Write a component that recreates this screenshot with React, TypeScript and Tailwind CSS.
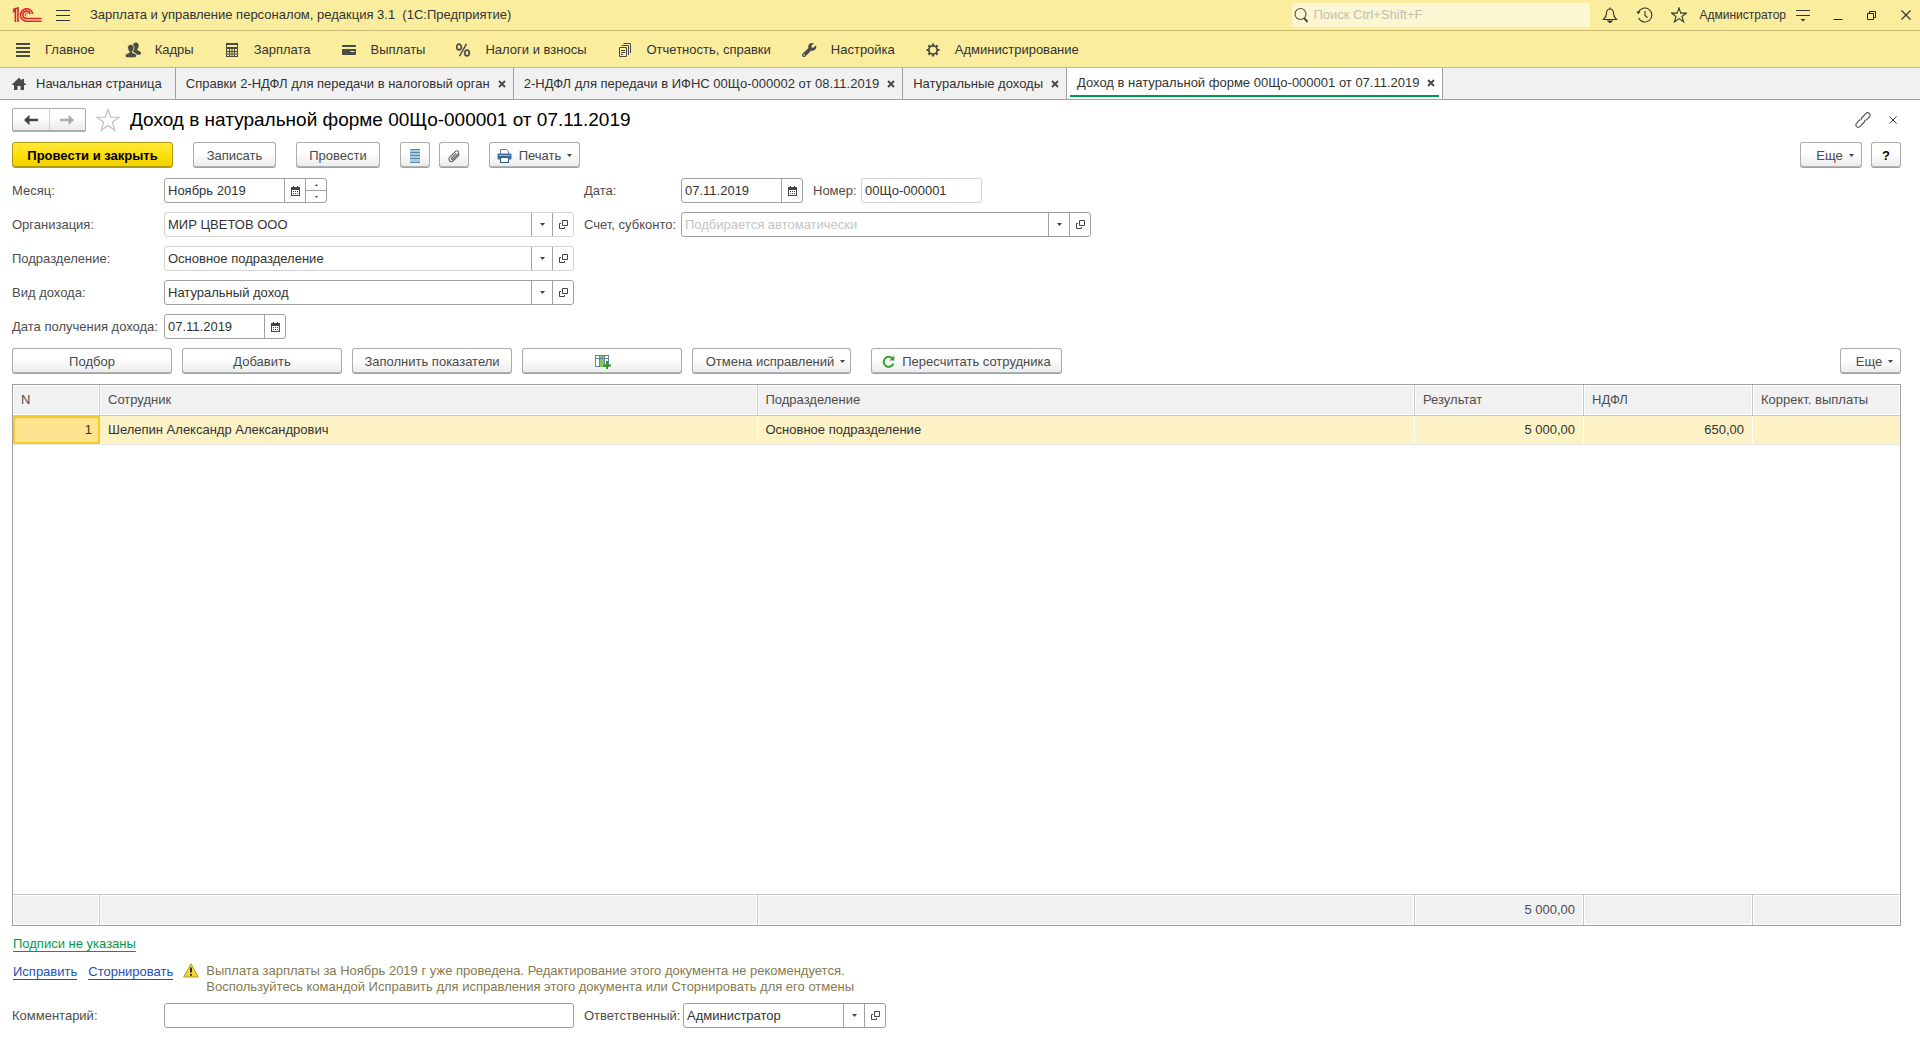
import React, { useState } from "react";

type Kids = { children?: React.ReactNode };

/* ---------- icons ---------- */

const Logo = () => (
  <svg width="30" height="16" viewBox="0 0 30 16" fill="none" stroke="#d9232b" strokeWidth="1.6">
    <path d="M1 5 3.400 3.200V15M1 2.600 6 1V15" />
    <path d="M20.800 6.900A6.200 6.200 0 1 0 14.600 14.200H29.500" />
    <path d="M18.200 7.200A3.700 3.700 0 1 0 14.600 11.500H29.500" />
    <path d="M16 7.200A1.400 1.400 0 1 0 14.600 9" strokeWidth="1" />
  </svg>
);

const Burger = () => (
  <svg width="14" height="13" viewBox="0 0 14 13" stroke="#333" strokeWidth="1">
    <path d="M0 1.500h14M0 6.500h14M0 11.500h14" />
  </svg>
);

const MainIcon = () => (
  <svg width="16" height="16" viewBox="0 0 16 16" stroke="#4b4b45" strokeWidth="2">
    <path d="M1 2h14M1 6h14M1 10h14M1 14h14" />
  </svg>
);

const PeopleIcon = () => (
  <svg width="16" height="16" viewBox="0 0 16 16">
    <path d="M10.800.5c1.900 0 3 1.300 2.900 3.200-.1 1.600-.7 2.600-1.400 3.200v1.300c1.500.6 3.200 1 3.600 2.300.2.600.1 1.500-.3 1.800-.7.4-1.900.5-3.200.5L8 9.500V3C8.300 1.500 9.300.5 10.800.5z" fill="#4b4b45" />
    <path d="M5.800 2.400c2.100 0 3.300 1.400 3.200 3.400-.1 1.800-.9 2.900-1.600 3.500v1.300c1.600.6 3.700 1.100 4.200 2.500.2.600.1 1.400-.3 1.800-1 .7-3.300.9-5.500.9-2.300 0-4.400-.2-5.300-.9-.4-.4-.5-1.200-.2-1.800.5-1.400 2.300-1.900 3.900-2.500V9.300C3.500 8.700 2.700 7.600 2.600 5.800c-.1-2 1.100-3.400 3.200-3.400z" fill="#4b4b45" stroke="#fbed9e" strokeWidth=".8" />
  </svg>
);

const CalcIcon = () => (
  <svg width="16" height="16" viewBox="0 0 16 16">
    <rect x="2" y="1" width="12" height="14" fill="#4b4b45" />
    <path d="M3 3h10v2H3zM3 7h2v2H3zM6 7h1.500v2H6zM8.500 7H10v2H8.500zM11 7h2v2h-2zM3 10h2v1.500H3zM6 10h1.500v1.500H6zM8.500 10H10v1.500H8.500zM11 10h2v1.500h-2zM3 12.500h2V14H3zM6 12.500h1.500V14H6zM8.500 12.500H10V14H8.500zM11 12.500h2V14h-2z" fill="#fbed9e" />
  </svg>
);

const CardIcon = () => (
  <svg width="16" height="16" viewBox="0 0 16 16">
    <path d="M2 3h12a1 1 0 0 1 1 1v1H1V4a1 1 0 0 1 1-1zM1 7h14v5a1 1 0 0 1-1 1H2a1 1 0 0 1-1-1z" fill="#4b4b45" />
    <path d="M9.500 9.500h4" stroke="#fbed9e" />
  </svg>
);

const PercentIcon = () => (
  <svg width="16" height="16" viewBox="0 0 16 16" fill="none" stroke="#4b4b45">
    <ellipse cx="4" cy="5" rx="2.300" ry="2.800" strokeWidth="1.700" />
    <ellipse cx="12" cy="11" rx="2.300" ry="2.800" strokeWidth="1.700" />
    <path d="M11.500 1.800 4.500 14.200" strokeWidth="1.500" />
  </svg>
);

const ReportIcon = () => (
  <svg width="16" height="16" viewBox="0 0 16 16" fill="none" stroke="#4b4b45" strokeWidth="1">
    <path d="M2.500 5.500h7v9h-7zM4.500 3.500h7v9.500M6.500 1.500h7v9.500" />
    <path d="M4 8.500h4M4 10.500h4M4 12.500h2" />
  </svg>
);

const WrenchIcon = () => (
  <svg width="16" height="16" viewBox="0 0 16 16" fill="#4b4b45">
    <path d="M12.800 1.200 10.300 3.700l.4 1.700 1.800.4 2.500-2.500c.6 1.700.2 3.400-1 4.500-1.100 1-2.500 1.300-3.900.9L4.300 14.500c-.8.8-2 .8-2.800.1-.7-.8-.7-2 .1-2.800l5.800-5.800c-.4-1.400-.1-2.800.9-3.900 1.200-1.200 2.900-1.500 4.500-.9z" />
    <circle cx="3" cy="13.100" r=".8" fill="#fbed9e" />
  </svg>
);

const GearIcon = () => (
  <svg width="16" height="16" viewBox="0 0 16 16" fill="none" stroke="#4b4b45">
    <circle cx="8" cy="8" r="4.200" strokeWidth="1.800" />
    <path d="M8 1.500v2M8 12.500v2M1.500 8h2M12.500 8h2M3.400 3.400l1.400 1.400M11.200 11.200l1.400 1.400M3.400 12.600l1.400-1.400M11.200 4.800l1.400-1.400" strokeWidth="2.200" />
  </svg>
);

const HomeIcon = () => (
  <svg width="16" height="14" viewBox="0 0 16 14" fill="#484848">
    <path d="M8 .8 11 3.600V2h2v3.500l2.600 2.600H13V13H9.500V9h-3v4H3V8.100H.4z" />
  </svg>
);

const SearchIcon = () => (
  <svg width="15" height="16" viewBox="0 0 15 16" fill="none" stroke="#55502f">
    <circle cx="6.500" cy="7" r="5.500" strokeWidth="1.100" />
    <path d="m10 11 3.600 4" strokeWidth="2" />
  </svg>
);

const BellIcon = () => (
  <svg width="16" height="16" viewBox="0 0 16 16" fill="none" stroke="#333" strokeWidth="1.100">
    <path d="M8 .5v1.600M8 2c-2.400 0-3.500 1.900-3.500 4.200C4.500 9.500 3.300 10.700 1.500 12.500h13C12.700 10.700 11.500 9.500 11.500 6.200 11.500 3.900 10.400 2 8 2z" />
    <path d="M6 14h4l-2 1.600z" fill="#333" />
  </svg>
);

const HistoryIcon = () => (
  <svg width="17" height="16" viewBox="0 0 17 16" fill="none" stroke="#333" strokeWidth="1.100">
    <path d="M2.300 5.500A7 7 0 1 1 2.500 11" />
    <path d="M9 4v4.500l2.500 2" />
    <path d="M.5 4.500h4L2.300 7.300z" fill="#333" stroke="none" />
  </svg>
);

const StarIcon = ({ size = 16, color = "#333" }: { size?: number; color?: string }) => (
  <svg width={size} height={size} viewBox="0 0 24 24" fill="none" stroke={color} strokeWidth={size > 20 ? 1.1 : 1.6}>
    <path d="M12 1.300 14.700 9.200H23.200L16.400 14.200 18.900 22.400 12 17.500 5.100 22.400 7.600 14.200.8 9.200H9.300z" />
  </svg>
);

const ServiceIcon = () => (
  <svg width="14" height="14" viewBox="0 0 14 14">
    <path d="M0 2.500h14M0 7.500h14" stroke="#333" />
    <path d="M4.500 11h5L7 13.500z" fill="#333" />
  </svg>
);

const MinimizeIcon = () => (
  <svg width="10" height="14" viewBox="0 0 10 14" stroke="#222"><path d="M.5 11.500h9" /></svg>
);
const RestoreIcon = () => (
  <svg width="10" height="14" viewBox="0 0 10 14" fill="none" stroke="#222">
    <path d="M.5 5.500h6v6h-6zM2.500 5V3.500h6v6H7" />
  </svg>
);
const CloseIcon = ({ size = 10 }: { size?: number }) => (
  <svg width={size} height={size} viewBox="0 0 10 10" stroke="#333" strokeWidth="1.200"><path d="m.5.5 9 9m0-9-9 9" /></svg>
);
const TabCloseIcon = () => (
  <svg width="8" height="8" viewBox="0 0 8 8" stroke="#484848" strokeWidth="1.900"><path d="m1 1 6 6m0-6-6 6" /></svg>
);

const LinkIcon = () => (
  <svg width="16" height="16" viewBox="0 0 16 16" fill="none" stroke="#555" strokeWidth="1.200">
    <path d="M6.300 8.200c-.4-1 0-1.900.8-2.700l3.700-3.900c1-1 2.500-1.100 3.500-.2 1 1 1 2.500 0 3.500L11 8.400" />
    <path d="M9.700 7.800c.4 1 0 1.900-.8 2.700l-3.700 3.900c-1 1-2.500 1.100-3.500.2-1-1-1-2.500 0-3.500L5 7.600" />
  </svg>
);

const ArrowIcon = ({ right = false }: { right?: boolean }) => (
  <svg width="14" height="12" viewBox="0 0 14 12" className={right ? "rotate-180" : ""}>
    <path d="M0 6 5.500.8V4.800H14v2.400H5.500v4z" fill={right ? "#adadad" : "#444"} />
  </svg>
);

const ListIcon = () => (
  <svg width="10" height="14" viewBox="0 0 10 14">
    <rect width="10" height="14" fill="#a9cbe2" />
    <path d="M0 .5h10M0 3.500h10M0 6.500h10M0 9.500h10M0 13.500h10" stroke="#5d88a6" />
  </svg>
);

const ClipIcon = () => (
  <svg width="14" height="14" viewBox="0 0 14 14" fill="none" stroke="#666" strokeWidth="1.100">
    <path d="M9.300 4.300 4.700 9c-.5.500-.5 1 0 1.300.4.300.8.200 1.200-.2l5-5c1-1 1.100-2 .3-2.800s-1.900-.7-2.900.3L3 7.900c-1.300 1.400-1.400 3-.4 4s2.600.9 3.900-.4l6-6" />
  </svg>
);

const PrinterIcon = () => (
  <svg width="15" height="14" viewBox="0 0 15 14">
    <path d="M3.500 5V.5h6l2 2V5" fill="#fff" stroke="#5c7f9e" />
    <rect x=".5" y="4.500" width="14" height="6" rx="1" fill="#3f6f98" />
    <path d="M2 6.500h11" stroke="#8fb2cf" />
    <rect x="3.500" y="8.500" width="8" height="5" fill="#fff" stroke="#33597b" />
  </svg>
);

const CalendarIcon = () => (
  <svg width="9" height="10" viewBox="0 0 9 10">
    <path d="M0 1h9v9H0z" fill="#444" />
    <path d="M2 0h1v1H2zM6 0h1v1H6z" fill="#444" />
    <path d="M1 4h7v5H1z" fill="#fff" />
    <path d="M2 5.500h5M2 7.500h5" stroke="#444" strokeDasharray="1 1" />
  </svg>
);

const OpenIcon = () => (
  <svg width="9" height="10" viewBox="0 0 9 10" fill="none" stroke="#444">
    <path d="M3.500.5h5v5h-5zM2 3.500H.5v5h5V7" />
  </svg>
);

const Caret = () => (
  <svg width="5" height="3" viewBox="0 0 5 3"><path d="M0 0h5L2.500 3z" fill="#444" /></svg>
);

const AddColumnIcon = () => (
  <svg width="17" height="16" viewBox="0 0 17 16">
    <rect x="1.500" y="1.500" width="13" height="11" fill="#fff" stroke="#5f83a3" />
    <rect x="6" y="2" width="4" height="11" fill="#86c56c" />
    <path d="M1.500 4.500h13M5.500 1.500v11M10.500 1.500v11" stroke="#5f83a3" />
    <path d="M13 7v8M9 11.500h8" stroke="#2c9a1c" strokeWidth="2" />
  </svg>
);

const RefreshIcon = () => (
  <svg width="13" height="13" viewBox="0 0 13 13">
    <path d="M10.800 3.900A5 5 0 1 0 11.400 8.600" fill="none" stroke="#33a333" strokeWidth="2" />
    <path d="M12.300.5v5H7.300z" fill="#33a333" />
  </svg>
);

const WarningIcon = () => (
  <svg width="16" height="15" viewBox="0 0 16 15">
    <path d="M8 .8 15.300 14H.7z" fill="#f3d63a" stroke="#b59a1f" strokeLinejoin="round" />
    <path d="M8 4.500v5M8 11v1.800" stroke="#222" strokeWidth="1.800" />
  </svg>
);

/* ---------- controls ---------- */

const Btn = ({ children, className = "", label }: Kids & { className?: string; label?: string }) => (
  <button
    type="button"
    aria-label={label}
    className={`flex h-[26px] shrink-0 items-center justify-center rounded-[3px] border border-[#adadad] border-b-[#a0a0a0] bg-linear-to-b from-white from-40% to-[#ebebeb] pt-px text-[#4a4a4a] shadow-[inset_0_-1px_0_#b4b4b4] ${className}`}
  >
    {children}
  </button>
);

type FieldProps = {
  id: string;
  value?: string;
  placeholder?: string;
  width: string;
  pale?: boolean;
  parts?: ("calendar" | "spin" | "list" | "open")[];
};

const partLabels = { calendar: "Выбрать дату", list: "Показать список", open: "Открыть" };

function Field({ id, value = "", placeholder, width, pale, parts = [] }: FieldProps) {
  const [text, setText] = useState(value);
  return (
    <div className={`flex h-[25px] overflow-hidden rounded-[3px] border bg-white ${pale ? "border-[#d4d4d4]" : "border-[#a0a0a0]"} ${width}`}>
      <input
        id={id}
        value={text}
        placeholder={placeholder}
        onChange={(e) => setText(e.target.value)}
        className="min-w-0 flex-1 bg-transparent px-[3px] text-[#333] outline-none placeholder:text-[#c4c4c4]"
      />
      {parts.map((p) =>
        p === "spin" ? (
          <div key={p} className="flex w-[21px] flex-col border-l border-[#a0a0a0]">
            <button type="button" aria-label="Следующий месяц" className="flex flex-1 items-center justify-center border-b border-[#a0a0a0]">
              <svg width="3" height="2" viewBox="0 0 3 2"><path d="M0 2h3L1.500 0z" fill="#444" /></svg>
            </button>
            <button type="button" aria-label="Предыдущий месяц" className="flex flex-1 items-center justify-center">
              <svg width="3" height="2" viewBox="0 0 3 2"><path d="M0 0h3L1.500 2z" fill="#444" /></svg>
            </button>
          </div>
        ) : (
          <button key={p} type="button" aria-label={partLabels[p]} className="flex w-[21px] items-center justify-center border-l border-[#a0a0a0]">
            {p === "calendar" ? <CalendarIcon /> : p === "list" ? <Caret /> : <OpenIcon />}
          </button>
        ),
      )}
    </div>
  );
}

const Label = ({ htmlFor, children, className = "" }: Kids & { htmlFor: string; className?: string }) => (
  <label htmlFor={htmlFor} className={`shrink-0 whitespace-nowrap text-[#4d4d4d] ${className}`}>{children}</label>
);

/* ---------- page ---------- */

const sections = [
  { title: "Главное", icon: <MainIcon /> },
  { title: "Кадры", icon: <PeopleIcon /> },
  { title: "Зарплата", icon: <CalcIcon /> },
  { title: "Выплаты", icon: <CardIcon /> },
  { title: "Налоги и взносы", icon: <PercentIcon /> },
  { title: "Отчетность, справки", icon: <ReportIcon /> },
  { title: "Настройка", icon: <WrenchIcon /> },
  { title: "Администрирование", icon: <GearIcon /> },
];

const tabs = [
  "Справки 2-НДФЛ для передачи в налоговый орган",
  "2-НДФЛ для передачи в ИФНС 00Що-000002 от 08.11.2019",
  "Натуральные доходы",
  "Доход в натуральной форме 00Що-000001 от 07.11.2019",
];

const TitleBar = () => (
  <header className="flex h-[31px] items-center border-b border-[#c9ba72] pr-[9px] pl-3">
    <Logo />
    <button type="button" aria-label="Меню" className="ml-3.5"><Burger /></button>
    <div className="ml-5 whitespace-pre">{"Зарплата и управление персоналом, редакция 3.1  (1С:Предприятие)"}</div>
    <div className="ml-auto flex h-6 w-[298px] items-center gap-1 rounded-[2px] bg-[#fdf6d2] pl-0.5">
      <SearchIcon />
      <input aria-label="Поиск" placeholder="Поиск Ctrl+Shift+F" className="min-w-0 flex-1 bg-transparent outline-none placeholder:text-[#c3c0b2]" />
    </div>
    <div className="ml-3 flex items-center gap-[18px]">
      <button type="button" aria-label="Уведомления"><BellIcon /></button>
      <button type="button" aria-label="История"><HistoryIcon /></button>
      <button type="button" aria-label="Избранное"><StarIcon /></button>
    </div>
    <button type="button" className="ml-3 text-xs">Администратор</button>
    <button type="button" aria-label="Сервис" className="ml-2.5"><ServiceIcon /></button>
    <div className="ml-[23px] flex items-center gap-6">
      <button type="button" aria-label="Свернуть"><MinimizeIcon /></button>
      <button type="button" aria-label="Восстановить"><RestoreIcon /></button>
      <button type="button" aria-label="Закрыть"><CloseIcon /></button>
    </div>
  </header>
);

const Sections = () => (
  <nav className="flex h-[37px] items-center gap-[30px] border-b border-[#c9ba72] pt-0.5 pl-[15px]">
    {sections.map((s) => (
      <button key={s.title} type="button" className="flex items-center gap-3.5 whitespace-nowrap">
        {s.icon}
        {s.title}
      </button>
    ))}
  </nav>
);

const Tabs = () => (
  <div className="flex h-8 border-b border-[#a0a0a0] bg-[#f1f1f1]">
    <button type="button" className="flex items-center gap-[9px] border-r border-[#a0a0a0] pr-[13px] pl-[11px] whitespace-nowrap">
      <HomeIcon />
      Начальная страница
    </button>
    {tabs.map((t, i) => {
      const active = i === tabs.length - 1;
      return (
        <div key={t} className={`flex flex-col border-r border-[#a0a0a0] px-[3px] ${active ? "bg-white pt-[3px]" : ""}`}>
          <div className="flex flex-1 items-center gap-2 pr-1 pl-[7px]">
            <button type="button" className="whitespace-nowrap">{t}</button>
            <button type="button" aria-label="Закрыть вкладку"><TabCloseIcon /></button>
          </div>
          {active && <div className="mb-0.5 h-0.5 bg-[#009a4e]" />}
        </div>
      );
    })}
  </div>
);

const head = "border-r border-b border-[#c8c8c8] px-2 text-left font-normal shadow-[inset_0_0_0_1px_#fff] last:border-r-0";
const cell = "border-r border-white px-2 last:border-r-0";
const foot = "border-t border-r border-[#c8c8c8] px-2 text-right shadow-[inset_0_0_0_1px_#fff] last:border-r-0";

const EmployeeTable = () => (
  <div className="mt-2.5 flex min-h-[200px] flex-1 flex-col border border-[#a0a0a0]">
    <table className="w-full flex-1 table-fixed border-separate border-spacing-0">
      <colgroup>
        <col className="w-[87px]" />
        <col />
        <col />
        <col className="w-[169px]" />
        <col className="w-[169px]" />
        <col className="w-[147px]" />
      </colgroup>
      <thead className="bg-[#f1f1f1] text-[#4d4d4d]">
        <tr className="h-[31px]">
          <th scope="col" className={head}>N</th>
          <th scope="col" className={head}>Сотрудник</th>
          <th scope="col" className={head}>Подразделение</th>
          <th scope="col" className={head}>Результат</th>
          <th scope="col" className={head}>НДФЛ</th>
          <th scope="col" className={head}>Коррект. выплаты</th>
        </tr>
      </thead>
      <tbody>
        <tr className="h-7 bg-[#fdf2c6]">
          <td className="border-2 border-[#f9ca24] bg-[#fee48f] px-1.5 text-right">1</td>
          <td className={cell}>Шелепин Александр Александрович</td>
          <td className={cell}>Основное подразделение</td>
          <td className={`${cell} text-right`}>5 000,00</td>
          <td className={`${cell} text-right`}>650,00</td>
          <td className={cell} />
        </tr>
        <tr>
          <td colSpan={6} className="border-t border-[#e6e6e6]" />
        </tr>
      </tbody>
      <tfoot className="bg-[#f1f1f1] text-[#4d4d4d]">
        <tr className="h-[31px]">
          <td className={foot} />
          <td className={foot} />
          <td className={foot} />
          <td className={foot}>5 000,00</td>
          <td className={foot} />
          <td className={foot} />
        </tr>
      </tfoot>
    </table>
  </div>
);

export default function App() {
  return (
    <div className="flex min-h-screen flex-col bg-white font-['Liberation_Sans',Arial,sans-serif] text-[13px] leading-4 text-[#333]">
      <div className="bg-[#fbed9e]">
        <TitleBar />
        <Sections />
      </div>
      <Tabs />

      <main className="flex flex-1 flex-col pt-2 pr-[19px] pb-[11px] pl-3">
        <div className="flex h-6 items-center">
          <div className="flex h-6 w-[74px] rounded-[2px] border border-b-2 border-[#adadad] bg-linear-to-b from-white from-40% to-[#ebebeb]">
            <button type="button" aria-label="Назад" className="flex flex-1 items-center justify-center border-r border-[#cfcfcf]"><ArrowIcon /></button>
            <button type="button" aria-label="Вперед" className="flex flex-1 items-center justify-center"><ArrowIcon right /></button>
          </div>
          <button type="button" aria-label="В избранное" className="ml-2.5"><StarIcon size={24} color="#b4bac4" /></button>
          <h1 className="ml-2.5 text-[19px] leading-6 text-black">Доход в натуральной форме 00Що-000001 от 07.11.2019</h1>
          <div className="mr-1 ml-auto flex items-center gap-[18px]">
            <button type="button" aria-label="Получить ссылку"><LinkIcon /></button>
            <button type="button" aria-label="Закрыть форму"><CloseIcon size={8} /></button>
          </div>
        </div>

        <div className="mt-2.5 flex">
          <button type="button" className="h-[26px] w-[161px] rounded-[3px] border border-[#b09a10] bg-linear-to-b from-[#ffe838] via-[#ffdf00] to-[#efcf00] pt-px font-bold text-black shadow-[inset_0_-1px_0_#b09a10]">
            Провести и закрыть
          </button>
          <Btn className="ml-5 w-[83px]">Записать</Btn>
          <Btn className="ml-5 w-[84px]">Провести</Btn>
          <Btn className="ml-5 w-[30px]" label="Движения документа"><ListIcon /></Btn>
          <Btn className="ml-[9px] w-[30px]" label="Присоединенные файлы"><ClipIcon /></Btn>
          <Btn className="ml-5 w-[91px]"><PrinterIcon /><span className="mr-1.5 ml-[7px]">Печать</span><Caret /></Btn>
          <Btn className="ml-auto w-[62px] pl-2"><span className="mr-1.5">Еще</span><Caret /></Btn>
          <Btn className="ml-[9px] w-[30px] font-bold text-black">?</Btn>
        </div>

        <form className="mt-2.5 flex gap-2.5">
          <div className="grid grid-cols-[152px_410px] items-center gap-y-[9px]">
            <Label htmlFor="month">Месяц:</Label>
            <Field id="month" value="Ноябрь 2019" width="w-[163px]" parts={["calendar", "spin"]} />
            <Label htmlFor="org">Организация:</Label>
            <Field id="org" value="МИР ЦВЕТОВ ООО" width="w-full" pale parts={["list", "open"]} />
            <Label htmlFor="dept">Подразделение:</Label>
            <Field id="dept" value="Основное подразделение" width="w-full" pale parts={["list", "open"]} />
            <Label htmlFor="kind">Вид дохода:</Label>
            <Field id="kind" value="Натуральный доход" width="w-full" parts={["list", "open"]} />
            <Label htmlFor="received">Дата получения дохода:</Label>
            <Field id="received" value="07.11.2019" width="w-[122px]" parts={["calendar"]} />
          </div>
          <div className="grid grid-cols-[97px_410px] items-center gap-y-[9px] self-start">
            <Label htmlFor="date">Дата:</Label>
            <div className="flex items-center">
              <Field id="date" value="07.11.2019" width="w-[122px]" parts={["calendar"]} />
              <Label htmlFor="number" className="ml-2.5 w-12">Номер:</Label>
              <Field id="number" value="00Що-000001" width="w-[121px]" pale />
            </div>
            <Label htmlFor="account">Счет, субконто:</Label>
            <Field id="account" placeholder="Подбирается автоматически" width="w-full" parts={["list", "open"]} />
          </div>
        </form>

        <div className="mt-[9px] flex gap-2.5">
          <Btn className="w-40">Подбор</Btn>
          <Btn className="w-40">Добавить</Btn>
          <Btn className="w-40">Заполнить показатели</Btn>
          <Btn className="w-40" label="Добавить показатели"><AddColumnIcon /></Btn>
          <Btn className="w-[159px] pl-2"><span className="mr-1.5">Отмена исправлений</span><Caret /></Btn>
          <Btn className="ml-2.5 w-[191px] gap-[7px]"><RefreshIcon />Пересчитать сотрудника</Btn>
          <Btn className="ml-auto w-[61px] pl-2"><span className="mr-1.5">Еще</span><Caret /></Btn>
        </div>

        <EmployeeTable />

        <div className="mt-2.5 pl-px">
          <a href="#signatures" className="border-b border-[#009a4e] text-[#009a4e]">Подписи не указаны</a>
        </div>

        <div className="mt-[11px] flex pl-px">
          <div className="mt-px flex gap-[11px]">
            <a href="#correct" className="text-[#1d50b8]"><span className="border-b border-[#1d50b8]">Исправить</span></a>
            <a href="#reverse" className="text-[#1d50b8]"><span className="border-b border-[#1d50b8]">Сторнировать</span></a>
          </div>
          <div className="ml-2.5"><WarningIcon /></div>
          <p className="ml-[7px] text-[#857a52]">
            Выплата зарплаты за Ноябрь 2019 г уже проведена. Редактирование этого документа не рекомендуется.
            <br />
            Воспользуйтесь командой Исправить для исправления этого документа или Сторнировать для его отмены
          </p>
        </div>

        <div className="mt-2 flex items-center">
          <Label htmlFor="comment" className="w-[152px]">Комментарий:</Label>
          <Field id="comment" width="w-[410px]" />
          <Label htmlFor="responsible" className="ml-2.5 w-[99px]">Ответственный:</Label>
          <Field id="responsible" value="Администратор" width="w-[203px]" parts={["list", "open"]} />
        </div>
      </main>
    </div>
  );
}
